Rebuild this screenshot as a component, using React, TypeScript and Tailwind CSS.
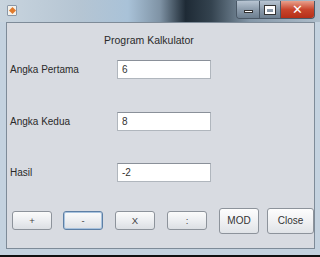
const font = "font-['Liberation_Sans','DejaVu_Sans',sans-serif]";

function SmallButton({ label, focused = false }: { label: string; focused?: boolean }) {
  return (
    <div
      className={`flex h-[19px] w-[40px] items-center justify-center rounded-[3px] border bg-[linear-gradient(180deg,#fbfbfb_0%,#eceef1_50%,#dcdfe4_100%)] text-[9.5px] text-[#444] ${
        focused ? "border-[#5d7fa5] shadow-[inset_0_0_0_1px_#a9c3de]" : "border-[#8d939b]"
      }`}
    >
      {label}
    </div>
  );
}

function BigButton({ label, width }: { label: string; width: string }) {
  return (
    <div
      className={`flex h-[26px] ${width} items-center justify-center rounded-[3px] border border-[#8d939b] bg-[linear-gradient(180deg,#fdfdfd_0%,#f0f1f3_50%,#e0e3e7_100%)] text-[10px] text-[#333]`}
    >
      {label}
    </div>
  );
}

function Field({ label, value, mt }: { label: string; value: string; mt: string }) {
  return (
    <div className={`flex items-center ${mt}`}>
      <span className="w-[110px] pl-[3px] text-[10px] text-[#2a2a2a]">{label}</span>
      <div className="flex h-[19px] w-[94px] items-center border border-[#b0b6bd] border-t-[#8a9099] bg-white pl-[4px] text-[10px] text-[#333]">
        {value}
      </div>
    </div>
  );
}

export default function App() {
  return (
    <div className={`flex h-[257px] w-[320px] flex-col bg-[#c4d2df] ${font}`}>
      <div className="flex h-[22px] items-start bg-[linear-gradient(90deg,#c8d4de_0%,#b5c5d3_25%,#a9c2d8_40%,#7f93a5_50%,#1e2a35_58%,#34434f_66%,#8497a8_78%,#aebdca_100%)]">
        <div className="ml-[7px] mt-[5px] flex h-[11px] w-[10px] items-center justify-center rounded-[1px] border border-[#8a98a8] bg-[#f4f1ea]">
          <div className="h-[5px] w-[5px] rotate-45 bg-[#e07a2c]" />
        </div>
        <div className="flex-1" />
        <div className="mr-[5px] mt-[1px] flex h-[18px] overflow-hidden rounded-b-[4px] border border-[#4a5866] border-t-0">
          <div className="flex w-[22px] items-center justify-center bg-[linear-gradient(180deg,#b8c5d2_0%,#8c9cac_50%,#6d7f90_100%)]">
            <div className="mt-[4px] h-[3px] w-[9px] border border-[#333] bg-white" />
          </div>
          <div className="flex w-[21px] items-center justify-center border-l border-[#4a5866] bg-[linear-gradient(180deg,#b8c5d2_0%,#8c9cac_50%,#6d7f90_100%)]">
            <div className="h-[8px] w-[10px] border-2 border-t-[3px] border-white outline outline-1 outline-[#333]" />
          </div>
          <div className="flex w-[34px] items-center justify-center border-l border-[#4a5866] bg-[linear-gradient(180deg,#e8a08c_0%,#c9452c_50%,#b52f18_100%)] text-[13px] font-bold text-white">
            ✕
          </div>
        </div>
      </div>
      <div className="flex flex-1 px-[6px] pb-[6px]">
        <div className="flex flex-1 flex-col border border-[#7e8b98] bg-[#d8dbe1]">
          <div className="pl-[97px] pt-[10px] text-[10.5px] text-[#2a2a2a]">Program Kalkulator</div>
          <Field label="Angka Pertama" value="6" mt="mt-[11px]" />
          <Field label="Angka Kedua" value="8" mt="mt-[33px]" />
          <Field label="Hasil" value="-2" mt="mt-[32px]" />
          <div className="mt-[26px] flex items-center pl-[5px]">
            <SmallButton label="+" />
            <div className="ml-[11px]">
              <SmallButton label="-" focused />
            </div>
            <div className="ml-[12px]">
              <SmallButton label="X" />
            </div>
            <div className="ml-[12px]">
              <SmallButton label=":" />
            </div>
            <div className="ml-[12px]">
              <BigButton label="MOD" width="w-[40px]" />
            </div>
            <div className="ml-[8px]">
              <BigButton label="Close" width="w-[47px]" />
            </div>
          </div>
        </div>
      </div>
      <div className="h-[2px] bg-[#111]" />
    </div>
  );
}
